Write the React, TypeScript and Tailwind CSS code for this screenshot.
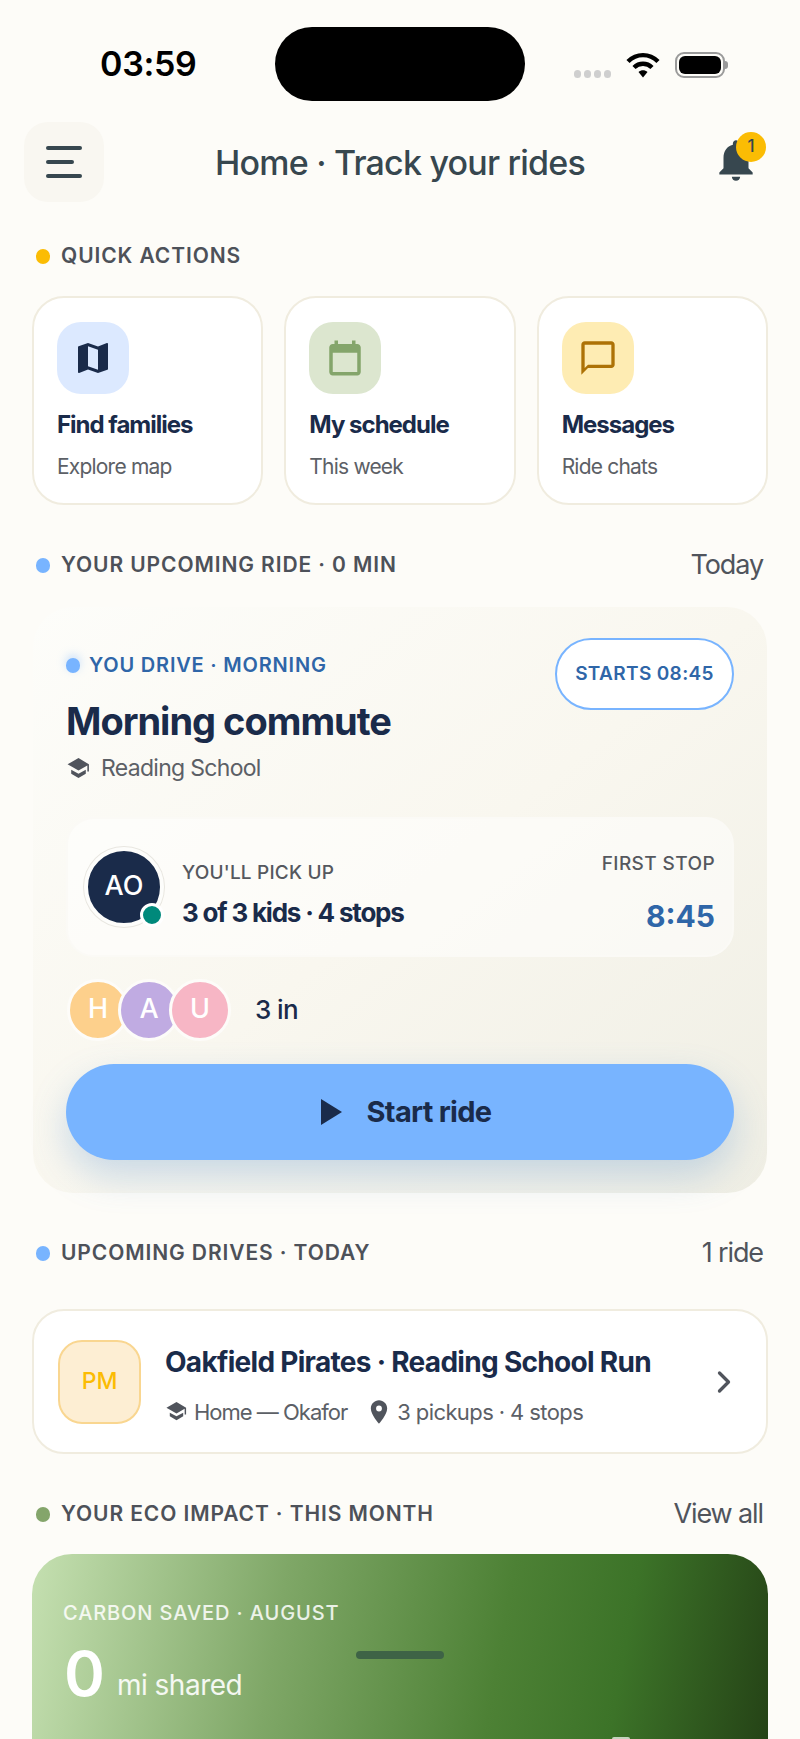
import { ChevronRight } from "lucide-react";

const FONT = "font-['Inter','Noto_Sans',sans-serif]";

const SchoolIcon = ({ className }: { className: string }) => (
    <svg viewBox="0 0 24 24" fill="currentColor" className={className}>
        <path d="M12 2 1.500 8 12 14l8.500-4.900V15H22V8L12 2Z" />
        <path d="M5 13.200V17l7 4 7-4v-3.800L12 17l-7-3.800Z" />
    </svg>
);

const SectionHeader = ({ dot, label, right }: { dot: string; label: string; right?: string }) => (
    <div className="flex h-8 items-center justify-between pl-9 pr-[37px]">
        <div className="flex items-center gap-[11px]">
            <span className={`h-[15px] w-[14px] rounded-full ${dot}`} />
            <span className="text-[21px] font-semibold tracking-[0.9px] text-[#4d5159]">{label}</span>
        </div>
        {right && <span className="text-[27px] tracking-[-1.1px] text-[#50545c]">{right}</span>}
    </div>
);

const ActionCard = ({
    tile,
    icon,
    title,
    sub,
}: {
    tile: string;
    icon: React.ReactNode;
    title: string;
    sub: string;
}) => (
    <div className="h-[209px] flex-1 rounded-[32px] border-2 border-[#f0ecdf] bg-white px-[23px] pt-[24px]">
        <div className={`flex h-[72px] w-[72px] items-center justify-center rounded-3xl ${tile}`}>{icon}</div>
        <p className="mt-[15px] text-[24px] font-[650] leading-8 tracking-[-1px] text-[#1a2b4a]">{title}</p>
        <p className="mt-[10px] text-[21px] leading-8 tracking-[-0.8px] text-[#5c6066]">{sub}</p>
    </div>
);

const Kid = ({ letter, bg, first }: { letter: string; bg: string; first?: boolean }) => (
    <div
        className={`flex h-[62px] w-[62px] items-center justify-center rounded-full border-[3px] border-[#fdfcf9] text-[27px] font-medium text-white ${bg} ${first ? "" : "-ml-[11px]"}`}
    >
        {letter}
    </div>
);

export default function App() {
    return (
        <div className={`relative h-[1739px] w-[800px] overflow-hidden bg-[#fdfcf8] ${FONT}`}>
            {/* status bar */}
            <div className="flex h-[122px] items-start pt-[27px]">
                <span className="ml-[100px] mt-[17px] w-[175px] text-[34px] font-semibold leading-10 tracking-[-0.3px] text-black">
                    03:59
                </span>
                <div className="h-[74px] w-[250px] rounded-[37px] bg-black" />
                <div className="ml-[49px] mt-[25px] flex items-center">
                    <div className="mt-[17px] flex gap-[3px]">
                        <span className="h-[8px] w-[7px] rounded-full bg-[#cfcfcf]" />
                        <span className="h-[8px] w-[7px] rounded-full bg-[#cfcfcf]" />
                        <span className="h-[8px] w-[7px] rounded-full bg-[#cfcfcf]" />
                        <span className="h-[8px] w-[7px] rounded-full bg-[#cfcfcf]" />
                    </div>
                    <svg viewBox="0 0 34 26" className="ml-[15px] h-[26px] w-[34px]" fill="none" stroke="black" strokeWidth="4.400">
                        <path d="M2 9.500C10.500 1 23.500 1 32 9.500" />
                        <path d="M8 15.500c5-5 13-5 18 0" />
                        <path d="M12.500 20 17 25.500 21.500 20c-2.500-2.400-6.500-2.400-9 0Z" fill="black" stroke="none" />
                    </svg>
                    <div className="ml-[15px] flex items-center">
                        <div className="flex h-[26px] w-[50px] items-center rounded-[9px] border-2 border-[#9a9a9a] p-[2px]">
                            <div className="h-full w-full rounded-[6px] bg-black" />
                        </div>
                        <div className="h-2 w-[3px] rounded-r-full bg-[#9a9a9a]" />
                    </div>
                </div>
            </div>

            {/* app bar */}
            <div className="grid h-20 grid-cols-[1fr_auto_1fr] items-center px-6">
                <div className="flex h-20 w-20 flex-col items-start justify-center gap-[10px] rounded-3xl bg-[#f9f7f1] pl-[22px]">
                    <span className="h-1 w-9 rounded-full bg-[#37474f]" />
                    <span className="h-1 w-7 rounded-full bg-[#37474f]" />
                    <span className="h-1 w-9 rounded-full bg-[#37474f]" />
                </div>
                <h1 className="text-[34px] font-medium tracking-[-0.8px] text-[#37474f]">Home · Track your rides</h1>
                <div className="relative -mt-1 mr-[15px] h-[50px] w-[50px] justify-self-end">
                    <svg viewBox="0 0 24 24" fill="#37474f" className="h-[50px] w-[50px]">
                        <path d="M12 22c1.100 0 2-.9 2-2h-4c0 1.100.9 2 2 2Zm6-6v-5c0-3.100-1.600-5.600-4.500-6.300V4c0-.8-.7-1.500-1.500-1.500S10.500 3.200 10.500 4v.7C7.600 5.400 6 7.900 6 11v5l-2 2v1h16v-1l-2-2Z" />
                    </svg>
                    <span className="absolute -top-[3px] left-[25px] flex h-[30px] w-[30px] items-center justify-center rounded-full bg-[#fbbc04] text-[17px] font-medium text-[#37474f]">
                        1
                    </span>
                </div>
            </div>

            <div className="mt-[38px]">
                <SectionHeader dot="bg-[#fbbc04]" label="QUICK ACTIONS" />
            </div>

            {/* quick actions */}
            <div className="mt-[24px] flex gap-[21px] px-8">
                <ActionCard
                    tile="bg-[#dce9ff]"
                    title="Find families"
                    sub="Explore map"
                    icon={
                        <svg viewBox="0 0 24 24" fill="#1a2b4a" className="h-10 w-10">
                            <path d="M20.500 3l-.16.03L15 5.100 9 3 3.360 4.900c-.21.07-.36.25-.36.48V20.500c0 .28.22.5.5.5l.16-.03L9 18.900l6 2.100 5.640-1.900c.21-.07.36-.25.36-.48V3.500c0-.28-.22-.5-.5-.5zM15 19l-6-2.110V5l6 2.110V19z" />
                        </svg>
                    }
                />
                <ActionCard
                    tile="bg-[#dce6cf]"
                    title="My schedule"
                    sub="This week"
                    icon={
                        <svg viewBox="0 0 24 24" fill="#84a56b" className="h-[42px] w-[42px]">
                            <path d="M19 4h-1V2h-2v2H8V2H6v2H5c-1.110 0-2 .9-2 2v14c0 1.100.89 2 2 2h14c1.100 0 2-.9 2-2V6c0-1.100-.9-2-2-2zm0 16H5V9h14v11z" />
                        </svg>
                    }
                />
                <ActionCard
                    tile="bg-[#feecb3]"
                    title="Messages"
                    sub="Ride chats"
                    icon={
                        <svg viewBox="0 0 24 24" fill="#ad7206" className="h-10 w-10">
                            <path d="M20 2H4c-1.100 0-2 .9-2 2v18l4-4h14c1.100 0 2-.9 2-2V4c0-1.100-.9-2-2-2zm0 14H6l-2 2V4h16v12z" />
                        </svg>
                    }
                />
            </div>

            <div className="mt-[44px]">
                <SectionHeader dot="bg-[#78b4ff]" label="YOUR UPCOMING RIDE · 0 MIN" right="Today" />
            </div>

            {/* upcoming ride */}
            <div className="mx-[33px] mt-[26px] mb-[44px] h-[586px] rounded-[40px] bg-gradient-to-br from-[#fdfdfa] via-[#f9f7ef] to-[#efeee4] px-[33px] pt-[32px]">
                <div className="flex items-start justify-between">
                    <div>
                        <div className="mt-[11px] flex items-center gap-[9px]">
                            <span className="h-[15px] w-[14px] rounded-full bg-[#78b4ff] shadow-[0_-3px_10px_#78b4ff66]" />
                            <span className="text-[20px] font-semibold tracking-[0.8px] text-[#2f66a8]">YOU DRIVE · MORNING</span>
                        </div>
                        <h2 className="mt-[17px] text-[38px] font-[650] leading-[48px] tracking-[-1px] text-[#1a2b4a]">
                            Morning commute
                        </h2>
                    </div>
                    <div className="-mt-px flex h-[72px] w-[179px] items-center justify-center rounded-full border-2 border-[#78b4ff] bg-white text-[19px] font-semibold tracking-[0.35px] text-[#2f66a8]">
                        STARTS 08:45
                    </div>
                </div>
                <div className="mt-[6px] flex items-center gap-[10px] text-[#5c6066]">
                    <SchoolIcon className="h-[25px] w-[25px] text-[#50545c]" />
                    <span className="text-[23px] tracking-[-0.7px]">Reading School</span>
                </div>

                {/* pick up */}
                <div className="mt-[31px] flex h-[140px] items-center justify-between rounded-[28px] border-2 border-[#fbfaf6] bg-white/50 pl-[16px] pr-[17px]">
                    <div className="flex items-center gap-[18px]">
                        <div className="relative flex h-[80px] w-[80px] items-center justify-center rounded-full border-[4px] border-[#fdfdfb] bg-[#1a2b4a] text-[27px] font-medium text-white shadow-[0_0_0_1px_#e8e6e0]">
                            AO
                            <span className="absolute -bottom-[4px] -right-[4px] h-[24px] w-[24px] rounded-full border-[3px] border-white bg-[#00897b]" />
                        </div>
                        <div className="mt-[14px]">
                            <p className="text-[19px] font-medium leading-7 tracking-[0.2px] text-[#55585e]">YOU'LL PICK UP</p>
                            <p className="mt-[10px] text-[26px] font-[650] leading-8 tracking-[-1.2px] text-[#1a2b4a]">
                                3 of 3 kids · 4 stops
                            </p>
                        </div>
                    </div>
                    <div className="mt-[11px] text-right">
                        <p className="text-[19px] font-medium leading-7 tracking-[0.4px] text-[#55585e]">FIRST STOP</p>
                        <p className="mt-[20px] text-[30px] font-bold leading-9 text-[#2f66a8]">8:45</p>
                    </div>
                </div>

                {/* kids */}
                <div className="mt-[22px] flex items-center pl-[1px]">
                    <Kid letter="H" bg="bg-[#fdd08c]" first />
                    <Kid letter="A" bg="bg-[#c0abe2]" />
                    <Kid letter="U" bg="bg-[#f7b6c5]" />
                    <span className="ml-[24px] text-[26px] font-medium tracking-[-0.6px] text-[#1a2b4a]">3 in</span>
                </div>

                <button className="mt-[23px] flex h-[96px] w-full items-center justify-center gap-[25px] rounded-full bg-[#78b4ff] pl-[12px] shadow-[0_16px_36px_rgba(80,140,210,0.28)]">
                    <svg viewBox="0 0 21 26" fill="#1a2b4a" className="h-[26px] w-[21px]">
                        <path d="M0 0 21 13 0 26Z" />
                    </svg>
                    <span className="text-[29px] font-[650] tracking-[-0.7px] text-[#1a2b4a]">Start ride</span>
                </button>
            </div>

            <SectionHeader dot="bg-[#78b4ff]" label="UPCOMING DRIVES · TODAY" right="1 ride" />

            {/* drive row */}
            <div className="mx-8 mt-[40px] flex h-[145px] items-center rounded-[32px] border-2 border-[#f0ecdf] bg-white px-6">
                <div className="flex h-[84px] w-[83px] shrink-0 items-center justify-center rounded-3xl border-2 border-[#f9d690] bg-[#fdeed3] text-[23px] font-medium text-[#fbbc04]">
                    PM
                </div>
                <div className="ml-6 mt-[8px] flex-1">
                    <p className="text-[28px] font-[650] leading-9 tracking-[-0.7px] text-[#1a2b4a]">
                        Oakfield Pirates · Reading School Run
                    </p>
                    <div className="mt-[16px] flex items-center text-[22px] leading-8 text-[#5c6066]">
                        <SchoolIcon className="h-[23px] w-[23px] text-[#50545c]" />
                        <span className="ml-[6px] tracking-[-1px]">Home — Okafor</span>
                        <svg viewBox="0 0 24 24" fill="#50545c" className="ml-[18px] h-7 w-7">
                            <path d="M12 2C8.130 2 5 5.130 5 9c0 5.250 7 13 7 13s7-7.750 7-13c0-3.870-3.130-7-7-7zm0 9.500a2.500 2.500 0 0 1 0-5 2.500 2.500 0 0 1 0 5z" />
                        </svg>
                        <span className="ml-1 tracking-[-0.6px]">3 pickups · 4 stops</span>
                    </div>
                </div>
                <ChevronRight className="-ml-px h-9 w-9 text-[#50545c]" strokeWidth={2.200} />
            </div>

            <div className="mt-[44px]">
                <SectionHeader dot="bg-[#84a56b]" label="YOUR ECO IMPACT · THIS MONTH" right="View all" />
            </div>

            {/* eco card */}
            <div className="mx-8 mt-[24px] h-[260px] rounded-[40px] bg-[linear-gradient(100deg,#c5e0b1_0%,#7fa767_33%,#4d8135_62%,#3c7328_78%,#233f15_100%)] pl-[31px] pt-[47px]">
                <p className="text-[20px] font-medium leading-6 tracking-[0.9px] text-white/85">CARBON SAVED · AUGUST</p>
                <div className="mt-[13px] flex items-end gap-[12px]">
                    <span className="ml-px text-[62px] font-semibold leading-[72px] text-white">0</span>
                    <span className="mb-[4px] text-[28px] tracking-[-0.5px] text-white/90">mi shared</span>
                </div>
            </div>

            {/* sheet handle and the top of what sits under it */}
            <div className="absolute left-[356px] top-[1651px] h-2 w-[88px] rounded-full bg-[#3e6346]" />
            <div className="absolute left-[612px] top-[1737px] h-[2px] w-[18px] rounded-t-sm bg-white/70" />
        </div>
    );
}
